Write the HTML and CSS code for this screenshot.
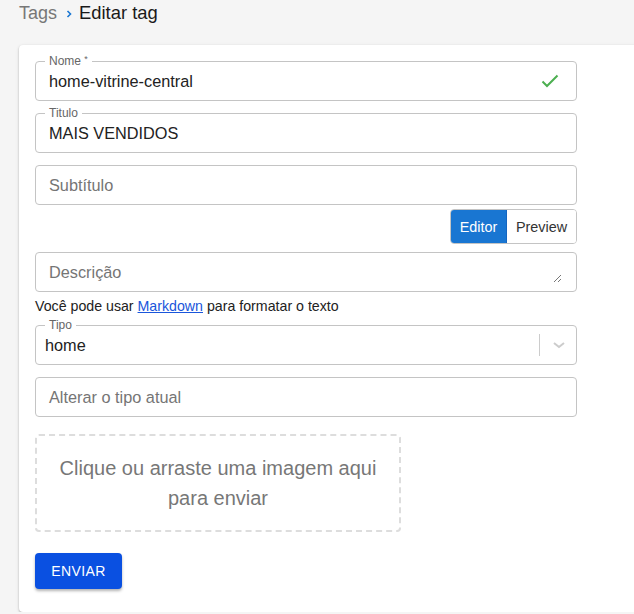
FILE: index.html
```html
<!DOCTYPE html>
<html lang="pt-BR">
<head>
<meta charset="utf-8">
<title>Editar tag</title>
<link rel="stylesheet" href="styles.css">
</head>
<body>
<nav class="crumbs">
  <span class="crumb-link">Tags</span>
  <svg class="crumb-sep" width="6" height="8" viewBox="0 0 6 8"><path d="M1.5 1 L4.5 4 L1.5 7" fill="none" stroke="#1976d2" stroke-width="1.6"/></svg>
  <span class="crumb-current">Editar tag</span>
</nav>
<main class="card">
  <form class="form">
    <div class="field">
      <span class="label">Nome <sup>*</sup></span>
      <span class="value">home-vitrine-central</span>
      <svg class="check" width="18" height="14" viewBox="0 0 18 14"><path d="M1.5 7.5 L6 12 L16.5 1.5" fill="none" stroke="#4caf50" stroke-width="2"/></svg>
    </div>
    <div class="field">
      <span class="label">Titulo</span>
      <span class="value">MAIS VENDIDOS</span>
    </div>
    <div class="field">
      <span class="placeholder">Subtítulo</span>
    </div>
    <div class="toggle-row">
      <div class="toggle">
        <span class="tbtn active">Editor</span>
        <span class="tbtn">Preview</span>
      </div>
    </div>
    <div class="field area">
      <span class="placeholder">Descrição</span>
      <svg class="grip" width="9" height="9" viewBox="0 0 9 9"><path d="M8 1 L1 8 M8 5 L5 8" stroke="#777" stroke-width="1"/></svg>
    </div>
    <p class="help">Você pode usar <a href="#">Markdown</a> para formatar o texto</p>
    <div class="field select">
      <span class="label">Tipo</span>
      <span class="value sel">home</span>
      <span class="sel-ind">
        <span class="sel-bar"></span>
        <svg width="14" height="8" viewBox="0 0 14 8"><path d="M2 2 L7 6 L12 2" fill="none" stroke="#ccc" stroke-width="2"/></svg>
      </span>
    </div>
    <div class="field gap-dz">
      <span class="placeholder">Alterar o tipo atual</span>
    </div>
    <div class="dropzone">Clique ou arraste uma imagem aqui para enviar</div>
    <button type="button" class="submit">ENVIAR</button>
  </form>
</main>
</body>
</html>
```
FILE: styles.css
```css
* { box-sizing: border-box; }
html, body { margin: 0; padding: 0; }
body {
  background: #f5f5f5;
  font-family: "Liberation Sans", Arial, sans-serif;
  color: #222;
  overflow: hidden;
}
.crumbs {
  display: flex;
  gap: 9px;
  padding: 2px 0 0 19px;
  height: 45px;
  align-items: flex-start;
  font-size: 18px;
  line-height: 22px;
}
.crumb-link { color: #777; }
.crumb-sep { margin-top: 8px; }
.crumb-current { color: #1a1a1a; margin-left: -2px; font-size: 18.4px; }
.card {
  margin-left: 19px;
  width: 640px;
  background: #fff;
  border-radius: 4px 0 0 4px;
  box-shadow: 0 1px 2px rgba(0,0,0,0.25), 0 1px 4px rgba(0,0,0,0.08);
  padding: 16px 0 23px 16px;
}
.form {
  width: 542px;
  display: flex;
  flex-direction: column;
}
.field {
  position: relative;
  height: 40px;
  border: 1px solid #c4c4c4;
  border-radius: 4px;
  display: flex;
  align-items: center;
  padding: 0 13px;
  margin-bottom: 12px;
  font-size: 16.3px;
}
.label {
  position: absolute;
  left: 9px;
  top: -8px;
  background: #fff;
  padding: 0 4px;
  font-size: 12px;
  line-height: 14px;
  color: #666;
}
.label sup { font-size: 9px; vertical-align: top; line-height: 10px; }
.value { color: #222; padding-top: 1px; }
.placeholder { color: #757575; }
.check { position: absolute; right: 17px; top: 12px; }
.toggle-row {
  display: flex;
  justify-content: flex-end;
  margin-top: -8px;
  margin-bottom: 8px;
}
.toggle {
  display: flex;
  height: 35px;
  border: 1px solid #c4c4c4;
  border-radius: 4px;
  overflow: hidden;
  font-size: 14.4px;
}
.tbtn {
  display: flex;
  align-items: center;
  justify-content: center;
  padding: 0 6px;
  color: #333;
  background: #fff;
  width: 69px;
}
.tbtn.active {
  background: #1976d2;
  color: #fff;
  width: 56px;
  border-right: 1px solid #1565c0;
}
.area { margin-bottom: 0; }
.grip { position: absolute; right: 14px; bottom: 8px; }
.help {
  margin: 6px 0 10px;
  font-size: 14.2px;
  line-height: 17px;
  color: #222;
}
.help a { color: #1a56db; text-decoration: underline; }
.select { padding-left: 9px; }
.sel-ind {
  position: absolute;
  right: 0;
  top: 0;
  bottom: 0;
  width: 37px;
  display: flex;
  align-items: center;
  justify-content: flex-end;
  padding-right: 10px;
}
.sel-bar {
  position: absolute;
  left: 0;
  top: 8px;
  bottom: 8px;
  width: 1px;
  background: #ccc;
}
.gap-dz { margin-bottom: 17px; }
.dropzone {
  width: 366px;
  height: 98px;
  border: 2px dashed #ddd;
  border-radius: 4px;
  display: flex;
  align-items: center;
  justify-content: center;
  text-align: center;
  padding: 0 16px;
  font-size: 20px;
  line-height: 30px;
  color: #777;
  margin-bottom: 21px;
}
.submit {
  align-self: flex-start;
  width: 87px;
  height: 36px;
  border: 0;
  border-radius: 4px;
  background: #0a50e1;
  color: #fff;
  font-family: "Liberation Sans", Arial, sans-serif;
  font-size: 14px;
  letter-spacing: 0.4px;
  box-shadow: 0 2px 3px rgba(0,0,0,0.3);
  padding: 0;
}
```
